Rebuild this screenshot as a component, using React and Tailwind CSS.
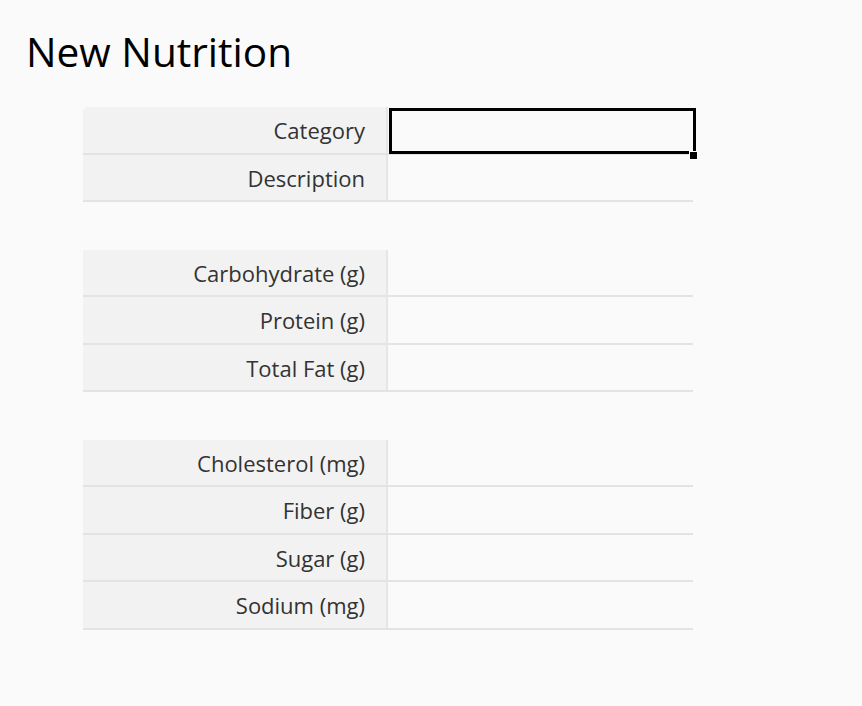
import React from "react";

const groups = [
  ["Category", "Description"],
  ["Carbohydrate (g)", "Protein (g)", "Total Fat (g)"],
  ["Cholesterol (mg)", "Fiber (g)", "Sugar (g)", "Sodium (mg)"],
];

function Row({ label, selected, first }) {
  return (
    <div className="flex h-[47.5px] border-b-2 border-[#e3e3e3]">
      <div
        className={
          "w-[305px] shrink-0 bg-[#f2f2f2] border-r-2 border-[#e6e6e6] flex items-center justify-end pr-[21px] pt-[2px] text-[22px] text-[#333333] " +
          (first ? "rounded-tl-[5px]" : "")
        }
      >
        {label}
      </div>
      <div className="relative w-[305px] shrink-0">
        {selected && (
          <div className="absolute top-[1px] left-[1px] right-[-3px] bottom-[-1.5px] border-[3px] border-black">
            <div className="absolute right-[-5px] bottom-[-9px] w-[9px] h-[9px] bg-black border border-white" />
          </div>
        )}
      </div>
    </div>
  );
}

export default function App() {
  return (
    <div
      className="min-h-screen bg-[#fafafa] text-black"
      style={{ fontFamily: '"Open Sans", "Noto Sans", sans-serif' }}
    >
      <h1 className="pl-[26px] pt-[25px] text-[40.6px] leading-[54px] font-normal text-black">
        New Nutrition
      </h1>
      <div className="ml-[83px] mt-[28px] w-[610px] flex flex-col">
        {groups.map((g, gi) => (
          <div key={gi} className="flex flex-col">
            {gi > 0 && <div className="h-[47.5px]" />}
            {g.map((label, i) => (
              <Row
                key={label}
                label={label}
                selected={gi === 0 && i === 0}
                first={gi === 0 && i === 0}
              />
            ))}
          </div>
        ))}
      </div>
    </div>
  );
}
